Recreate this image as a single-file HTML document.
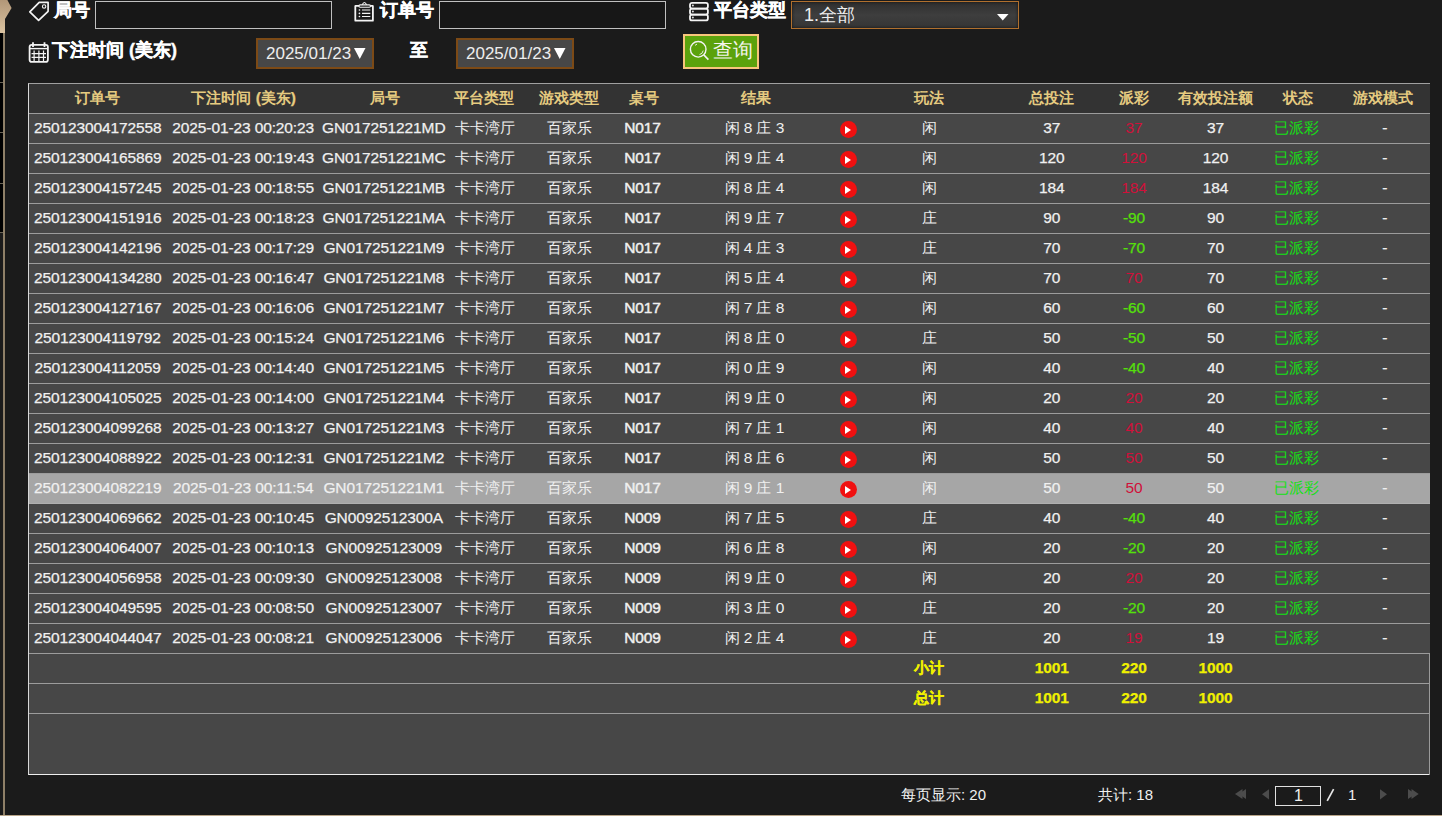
<!DOCTYPE html>
<html><head><meta charset="utf-8">
<style>
*{box-sizing:border-box;margin:0;padding:0}
html,body{width:1442px;height:816px;overflow:hidden;background:#1b1b1b}
body{position:relative;font-family:"Liberation Sans",sans-serif;color:#f2f2f2}
.abs{position:absolute}
/* left strip */
#lstrip{position:absolute;left:0;top:0;width:6px;height:816px}
#lline{position:absolute;left:3px;top:0;width:2px;height:816px;background:#8f8068}
.blk{position:absolute;left:0;width:3px;background:#000}
.sep{position:absolute;left:0;width:3px;height:1px;background:#6b6456}
#bline{position:absolute;left:0;top:815px;width:1442px;height:1px;background:#b9a589}
/* filters */
.lbl{position:absolute;font-weight:bold;font-size:18px;line-height:20px;color:#fff;white-space:nowrap;-webkit-text-stroke:0.4px #fff}
.inp{position:absolute;border:1px solid #c0c0c0;background:#171717}
.datebox{position:absolute;border:2px solid #7c4a16;background:#474747;color:#eee;font-size:17px;line-height:27px;white-space:nowrap}
.sel{position:absolute;border:1px solid #b0702e;background:linear-gradient(#2e2e2e,#3e3e3e 50%,#353535);box-shadow:inset 0 0 3px #111;color:#eee;font-size:18px;line-height:26px;white-space:nowrap}
.btn{position:absolute;border:2px solid #f7c57b;background:#5ba20c;color:#f4f4ec;font-size:20px;line-height:30px;white-space:nowrap}
/* table */
#tbl{position:absolute;left:28px;top:83px;width:1402px;height:692px;border-left:1px solid #d8d8d8;border-top:1px solid #a0a0a0;border-bottom:1px solid #eeeeee;background:#474747}
#rborder{position:absolute;left:1429px;top:654px;width:1px;height:121px;background:#9a9a9a}
.hd{position:absolute;left:0;top:0;width:1401px;height:30px;background:#333;border-bottom:1px solid #9c9c9c}
.hd .c{color:#e6cb80;font-weight:bold}
.row{position:absolute;left:0;width:1401px;height:30px;background:#474747;border-bottom:1px solid #9c9c9c}
.row.hl{background:#a6a6a6;border-bottom-color:#b0b0b0}
.row.sum{width:1400px}
.c{position:absolute;top:-1px;height:29px;line-height:29px;text-align:center;font-size:15px;white-space:nowrap;color:#f0f0f0}
.n{font-size:15.5px;letter-spacing:-0.12px;-webkit-text-stroke:0.25px currentColor;position:relative;top:0px}
.bd .n{-webkit-text-stroke:0.45px currentColor}
.res .n{-webkit-text-stroke:0}
.red .n{-webkit-text-stroke:0}
.red{color:#d0103a}
.grn{color:#55e00a}
.st{color:#14e014}
.sum .c{color:#f0f000;font-weight:bold;-webkit-text-stroke:0.2px #f0f000}
.play{position:absolute;top:7px;width:17px;height:17px;border-radius:50%;background:#f01010}
.play:after{content:"";position:absolute;left:5.5px;top:4.5px;border-left:6px solid #fff;border-top:4px solid transparent;border-bottom:4px solid transparent}
/* pager */
.pg{position:absolute;font-size:15px;line-height:20px;color:#f0f0f0;white-space:nowrap}
.pbox{position:absolute;left:1275px;top:786px;width:46px;height:20px;border:1px solid #e0e0e0;background:#1b1b1b}
</style></head><body>

<div id="lstrip">
  <svg class="abs" style="left:0;top:0" width="14" height="34"><defs><linearGradient id="tg" x1="0" y1="0" x2="0" y2="1"><stop offset="0" stop-color="#b29778"/><stop offset="1" stop-color="#dcc4a2"/></linearGradient></defs><polygon points="0,0 7.4,0 11.6,8 5,19 5,33 0,33" fill="url(#tg)"/></svg>
  <div id="lline" style="top:33px"></div>
  <div class="blk" style="top:33px;height:199px"></div>
  <div class="sep" style="top:82px"></div>
  <div class="sep" style="top:132px"></div>
  <div class="sep" style="top:183px"></div>
  <div class="sep" style="top:232px"></div>
</div>
<div id="bline"></div>

<!-- icons overlay -->
<svg class="abs" style="left:0;top:0;z-index:5" width="1442" height="80" fill="none" stroke="#f4f4f4" stroke-width="1.8">
  <!-- tag -->
  <path d="M39.2,2.4 L48.1,2.4 L48.1,11.3 L38.6,20.3 L29.8,11.8 Z" stroke-linejoin="round" stroke-width="1.7"/>
  <circle cx="44.1" cy="6.5" r="1.7" stroke-width="1.1"/>
  <!-- clipboard -->
  <rect x="355.3" y="5.9" width="17.6" height="14.8" rx="0.3"/>
  <rect x="358.9" y="4.9" width="11.6" height="2.4" rx="1.2" stroke-width="1.1" fill="#1b1b1b"/>
  <path d="M362.2,4.8 Q364.4,0.2 366.6,4.8" stroke-width="1.1"/>
  <path d="M362,10 H370.3 M362,13.4 H370.3 M362,16.5 H370.3" stroke-width="1.1"/>
  <path d="M359.4,10 h0.1 M359.4,13.4 h0.1 M359.4,16.5 h0.1" stroke-width="1.6" stroke-linecap="round"/>
  <!-- server -->
  <rect x="690" y="2.8" width="17.9" height="5.8" rx="2"/>
  <rect x="690" y="8.6" width="17.9" height="6" rx="2"/>
  <rect x="690" y="14.6" width="17.9" height="5.8" rx="2"/>
  <circle cx="692.9" cy="5.6" r="1" fill="#ddd" stroke="none"/>
  <circle cx="692.9" cy="11.5" r="1" fill="#ddd" stroke="none"/>
  <circle cx="692.9" cy="17.5" r="1" fill="#ddd" stroke="none"/>
  <!-- calendar -->
  <rect x="29.6" y="44.9" width="18.3" height="17" rx="2.2"/>
  <path d="M30,48.6 H47.5" stroke-width="1.4"/>
  <path d="M33,42.2 V47 M44.5,42.2 V47" stroke-width="1.8"/>
  <path d="M31.5,53.6 H46 M31.5,57.4 H46 M34.1,50.5 V61 M38.9,50.5 V61 M43.5,50.5 V61" stroke-width="1.2"/>
  <!-- magnifier -->
  <circle cx="698.2" cy="49.3" r="7.8" stroke-width="1.4"/>
  <path d="M703.8,54.9 L708.4,59.6" stroke-width="1.6"/>
  <path d="M695,45.5 A4.5,4.5 0 0 1 697,44.2" stroke-width="0.9"/>
  <path d="M699.5,54.6 A5,5 0 0 0 703.2,50.6" stroke-width="0.9"/>
</svg>

<div class="lbl" style="left:54px;top:0px">局号</div>
<div class="inp" style="left:95px;top:1px;width:237px;height:28px"></div>
<div class="lbl" style="left:380px;top:0px">订单号</div>
<div class="inp" style="left:439px;top:1px;width:227px;height:28px"></div>
<div class="lbl" style="left:714px;top:0px">平台类型</div>
<div class="sel" style="left:791px;top:1px;width:228px;height:28px"><span class="abs" style="left:12px;top:0">1.全部</span><svg class="abs" style="left:205px;top:12px" width="12" height="7"><polygon points="0,0 11.5,0 5.75,6.5" fill="#fff"/></svg></div>

<div class="lbl" style="left:52px;top:40px">下注时间 (美东)</div>
<div class="datebox" style="left:256px;top:38px;width:118px;height:31px"><span class="abs" style="left:8px;top:0px">2025/01/23</span><svg class="abs" style="left:96px;top:8px" width="12" height="12"><polygon points="0,0 11.5,0 5.75,11" fill="#fff"/></svg></div>
<div class="lbl" style="left:410px;top:40px">至</div>
<div class="datebox" style="left:456px;top:38px;width:118px;height:31px"><span class="abs" style="left:8px;top:0px">2025/01/23</span><svg class="abs" style="left:96px;top:8px" width="12" height="12"><polygon points="0,0 11.5,0 5.75,11" fill="#fff"/></svg></div>
<div class="btn" style="left:683px;top:34px;width:76px;height:35px"><span class="abs" style="left:28px;top:-1.5px">查询</span></div>

<div id="tbl">
<div class="hd"><span class="c" style="left:-11.1px;width:160px">订单号</span><span class="c" style="left:134.6px;width:160px">下注时间 <span class="n">(</span>美东<span class="n">)</span></span><span class="c" style="left:275.9px;width:160px">局号</span><span class="c" style="left:375.4px;width:160px">平台类型</span><span class="c" style="left:459.9px;width:160px">游戏类型</span><span class="c" style="left:534.9px;width:160px">桌号</span><span class="c" style="left:646.5px;width:160px">结果</span><span class="c" style="left:820.1px;width:160px">玩法</span><span class="c" style="left:942.7px;width:160px">总投注</span><span class="c" style="left:1024.5px;width:160px">派彩</span><span class="c" style="left:1106.1px;width:160px">有效投注额</span><span class="c" style="left:1189.1px;width:160px">状态</span><span class="c" style="left:1274.3px;width:160px">游戏模式</span></div>
<div class="row" style="top:30px"><span class="c" style="left:-11.3px;width:160px"><span class="n">250123004172558</span></span><span class="c" style="left:134.2px;width:160px"><span class="n">2025-01-23</span> <span class="n">00:20:23</span></span><span class="c" style="left:274.8px;width:160px"><span class="n">GN017251221MD</span></span><span class="c" style="left:375.8px;width:160px">卡卡湾厅</span><span class="c" style="left:460.1px;width:160px">百家乐</span><span class="c bd" style="left:533.6px;width:160px"><span class="n">N017</span></span><span class="c res" style="left:645.4px;width:160px">闲 <span class="n">8</span> 庄 <span class="n">3</span></span><i class="play" style="left:810.5px"></i><span class="c" style="left:820.0px;width:160px">闲</span><span class="c" style="left:942.8px;width:160px"><span class="n">37</span></span><span class="c red" style="left:1025.0px;width:160px"><span class="n">37</span></span><span class="c" style="left:1106.6px;width:160px"><span class="n">37</span></span><span class="c st" style="left:1187.8px;width:160px">已派彩</span><span class="c" style="left:1275.7px;width:160px"><span class="n">-</span></span></div>
<div class="row" style="top:60px"><span class="c" style="left:-11.3px;width:160px"><span class="n">250123004165869</span></span><span class="c" style="left:134.2px;width:160px"><span class="n">2025-01-23</span> <span class="n">00:19:43</span></span><span class="c" style="left:274.8px;width:160px"><span class="n">GN017251221MC</span></span><span class="c" style="left:375.8px;width:160px">卡卡湾厅</span><span class="c" style="left:460.1px;width:160px">百家乐</span><span class="c bd" style="left:533.6px;width:160px"><span class="n">N017</span></span><span class="c res" style="left:645.4px;width:160px">闲 <span class="n">9</span> 庄 <span class="n">4</span></span><i class="play" style="left:810.5px"></i><span class="c" style="left:820.0px;width:160px">闲</span><span class="c" style="left:942.8px;width:160px"><span class="n">120</span></span><span class="c red" style="left:1025.0px;width:160px"><span class="n">120</span></span><span class="c" style="left:1106.6px;width:160px"><span class="n">120</span></span><span class="c st" style="left:1187.8px;width:160px">已派彩</span><span class="c" style="left:1275.7px;width:160px"><span class="n">-</span></span></div>
<div class="row" style="top:90px"><span class="c" style="left:-11.3px;width:160px"><span class="n">250123004157245</span></span><span class="c" style="left:134.2px;width:160px"><span class="n">2025-01-23</span> <span class="n">00:18:55</span></span><span class="c" style="left:274.8px;width:160px"><span class="n">GN017251221MB</span></span><span class="c" style="left:375.8px;width:160px">卡卡湾厅</span><span class="c" style="left:460.1px;width:160px">百家乐</span><span class="c bd" style="left:533.6px;width:160px"><span class="n">N017</span></span><span class="c res" style="left:645.4px;width:160px">闲 <span class="n">8</span> 庄 <span class="n">4</span></span><i class="play" style="left:810.5px"></i><span class="c" style="left:820.0px;width:160px">闲</span><span class="c" style="left:942.8px;width:160px"><span class="n">184</span></span><span class="c red" style="left:1025.0px;width:160px"><span class="n">184</span></span><span class="c" style="left:1106.6px;width:160px"><span class="n">184</span></span><span class="c st" style="left:1187.8px;width:160px">已派彩</span><span class="c" style="left:1275.7px;width:160px"><span class="n">-</span></span></div>
<div class="row" style="top:120px"><span class="c" style="left:-11.3px;width:160px"><span class="n">250123004151916</span></span><span class="c" style="left:134.2px;width:160px"><span class="n">2025-01-23</span> <span class="n">00:18:23</span></span><span class="c" style="left:274.8px;width:160px"><span class="n">GN017251221MA</span></span><span class="c" style="left:375.8px;width:160px">卡卡湾厅</span><span class="c" style="left:460.1px;width:160px">百家乐</span><span class="c bd" style="left:533.6px;width:160px"><span class="n">N017</span></span><span class="c res" style="left:645.4px;width:160px">闲 <span class="n">9</span> 庄 <span class="n">7</span></span><i class="play" style="left:810.5px"></i><span class="c" style="left:820.0px;width:160px">庄</span><span class="c" style="left:942.8px;width:160px"><span class="n">90</span></span><span class="c grn" style="left:1025.0px;width:160px"><span class="n">-90</span></span><span class="c" style="left:1106.6px;width:160px"><span class="n">90</span></span><span class="c st" style="left:1187.8px;width:160px">已派彩</span><span class="c" style="left:1275.7px;width:160px"><span class="n">-</span></span></div>
<div class="row" style="top:150px"><span class="c" style="left:-11.3px;width:160px"><span class="n">250123004142196</span></span><span class="c" style="left:134.2px;width:160px"><span class="n">2025-01-23</span> <span class="n">00:17:29</span></span><span class="c" style="left:274.8px;width:160px"><span class="n">GN017251221M9</span></span><span class="c" style="left:375.8px;width:160px">卡卡湾厅</span><span class="c" style="left:460.1px;width:160px">百家乐</span><span class="c bd" style="left:533.6px;width:160px"><span class="n">N017</span></span><span class="c res" style="left:645.4px;width:160px">闲 <span class="n">4</span> 庄 <span class="n">3</span></span><i class="play" style="left:810.5px"></i><span class="c" style="left:820.0px;width:160px">庄</span><span class="c" style="left:942.8px;width:160px"><span class="n">70</span></span><span class="c grn" style="left:1025.0px;width:160px"><span class="n">-70</span></span><span class="c" style="left:1106.6px;width:160px"><span class="n">70</span></span><span class="c st" style="left:1187.8px;width:160px">已派彩</span><span class="c" style="left:1275.7px;width:160px"><span class="n">-</span></span></div>
<div class="row" style="top:180px"><span class="c" style="left:-11.3px;width:160px"><span class="n">250123004134280</span></span><span class="c" style="left:134.2px;width:160px"><span class="n">2025-01-23</span> <span class="n">00:16:47</span></span><span class="c" style="left:274.8px;width:160px"><span class="n">GN017251221M8</span></span><span class="c" style="left:375.8px;width:160px">卡卡湾厅</span><span class="c" style="left:460.1px;width:160px">百家乐</span><span class="c bd" style="left:533.6px;width:160px"><span class="n">N017</span></span><span class="c res" style="left:645.4px;width:160px">闲 <span class="n">5</span> 庄 <span class="n">4</span></span><i class="play" style="left:810.5px"></i><span class="c" style="left:820.0px;width:160px">闲</span><span class="c" style="left:942.8px;width:160px"><span class="n">70</span></span><span class="c red" style="left:1025.0px;width:160px"><span class="n">70</span></span><span class="c" style="left:1106.6px;width:160px"><span class="n">70</span></span><span class="c st" style="left:1187.8px;width:160px">已派彩</span><span class="c" style="left:1275.7px;width:160px"><span class="n">-</span></span></div>
<div class="row" style="top:210px"><span class="c" style="left:-11.3px;width:160px"><span class="n">250123004127167</span></span><span class="c" style="left:134.2px;width:160px"><span class="n">2025-01-23</span> <span class="n">00:16:06</span></span><span class="c" style="left:274.8px;width:160px"><span class="n">GN017251221M7</span></span><span class="c" style="left:375.8px;width:160px">卡卡湾厅</span><span class="c" style="left:460.1px;width:160px">百家乐</span><span class="c bd" style="left:533.6px;width:160px"><span class="n">N017</span></span><span class="c res" style="left:645.4px;width:160px">闲 <span class="n">7</span> 庄 <span class="n">8</span></span><i class="play" style="left:810.5px"></i><span class="c" style="left:820.0px;width:160px">闲</span><span class="c" style="left:942.8px;width:160px"><span class="n">60</span></span><span class="c grn" style="left:1025.0px;width:160px"><span class="n">-60</span></span><span class="c" style="left:1106.6px;width:160px"><span class="n">60</span></span><span class="c st" style="left:1187.8px;width:160px">已派彩</span><span class="c" style="left:1275.7px;width:160px"><span class="n">-</span></span></div>
<div class="row" style="top:240px"><span class="c" style="left:-11.3px;width:160px"><span class="n">250123004119792</span></span><span class="c" style="left:134.2px;width:160px"><span class="n">2025-01-23</span> <span class="n">00:15:24</span></span><span class="c" style="left:274.8px;width:160px"><span class="n">GN017251221M6</span></span><span class="c" style="left:375.8px;width:160px">卡卡湾厅</span><span class="c" style="left:460.1px;width:160px">百家乐</span><span class="c bd" style="left:533.6px;width:160px"><span class="n">N017</span></span><span class="c res" style="left:645.4px;width:160px">闲 <span class="n">8</span> 庄 <span class="n">0</span></span><i class="play" style="left:810.5px"></i><span class="c" style="left:820.0px;width:160px">庄</span><span class="c" style="left:942.8px;width:160px"><span class="n">50</span></span><span class="c grn" style="left:1025.0px;width:160px"><span class="n">-50</span></span><span class="c" style="left:1106.6px;width:160px"><span class="n">50</span></span><span class="c st" style="left:1187.8px;width:160px">已派彩</span><span class="c" style="left:1275.7px;width:160px"><span class="n">-</span></span></div>
<div class="row" style="top:270px"><span class="c" style="left:-11.3px;width:160px"><span class="n">250123004112059</span></span><span class="c" style="left:134.2px;width:160px"><span class="n">2025-01-23</span> <span class="n">00:14:40</span></span><span class="c" style="left:274.8px;width:160px"><span class="n">GN017251221M5</span></span><span class="c" style="left:375.8px;width:160px">卡卡湾厅</span><span class="c" style="left:460.1px;width:160px">百家乐</span><span class="c bd" style="left:533.6px;width:160px"><span class="n">N017</span></span><span class="c res" style="left:645.4px;width:160px">闲 <span class="n">0</span> 庄 <span class="n">9</span></span><i class="play" style="left:810.5px"></i><span class="c" style="left:820.0px;width:160px">闲</span><span class="c" style="left:942.8px;width:160px"><span class="n">40</span></span><span class="c grn" style="left:1025.0px;width:160px"><span class="n">-40</span></span><span class="c" style="left:1106.6px;width:160px"><span class="n">40</span></span><span class="c st" style="left:1187.8px;width:160px">已派彩</span><span class="c" style="left:1275.7px;width:160px"><span class="n">-</span></span></div>
<div class="row" style="top:300px"><span class="c" style="left:-11.3px;width:160px"><span class="n">250123004105025</span></span><span class="c" style="left:134.2px;width:160px"><span class="n">2025-01-23</span> <span class="n">00:14:00</span></span><span class="c" style="left:274.8px;width:160px"><span class="n">GN017251221M4</span></span><span class="c" style="left:375.8px;width:160px">卡卡湾厅</span><span class="c" style="left:460.1px;width:160px">百家乐</span><span class="c bd" style="left:533.6px;width:160px"><span class="n">N017</span></span><span class="c res" style="left:645.4px;width:160px">闲 <span class="n">9</span> 庄 <span class="n">0</span></span><i class="play" style="left:810.5px"></i><span class="c" style="left:820.0px;width:160px">闲</span><span class="c" style="left:942.8px;width:160px"><span class="n">20</span></span><span class="c red" style="left:1025.0px;width:160px"><span class="n">20</span></span><span class="c" style="left:1106.6px;width:160px"><span class="n">20</span></span><span class="c st" style="left:1187.8px;width:160px">已派彩</span><span class="c" style="left:1275.7px;width:160px"><span class="n">-</span></span></div>
<div class="row" style="top:330px"><span class="c" style="left:-11.3px;width:160px"><span class="n">250123004099268</span></span><span class="c" style="left:134.2px;width:160px"><span class="n">2025-01-23</span> <span class="n">00:13:27</span></span><span class="c" style="left:274.8px;width:160px"><span class="n">GN017251221M3</span></span><span class="c" style="left:375.8px;width:160px">卡卡湾厅</span><span class="c" style="left:460.1px;width:160px">百家乐</span><span class="c bd" style="left:533.6px;width:160px"><span class="n">N017</span></span><span class="c res" style="left:645.4px;width:160px">闲 <span class="n">7</span> 庄 <span class="n">1</span></span><i class="play" style="left:810.5px"></i><span class="c" style="left:820.0px;width:160px">闲</span><span class="c" style="left:942.8px;width:160px"><span class="n">40</span></span><span class="c red" style="left:1025.0px;width:160px"><span class="n">40</span></span><span class="c" style="left:1106.6px;width:160px"><span class="n">40</span></span><span class="c st" style="left:1187.8px;width:160px">已派彩</span><span class="c" style="left:1275.7px;width:160px"><span class="n">-</span></span></div>
<div class="row" style="top:360px"><span class="c" style="left:-11.3px;width:160px"><span class="n">250123004088922</span></span><span class="c" style="left:134.2px;width:160px"><span class="n">2025-01-23</span> <span class="n">00:12:31</span></span><span class="c" style="left:274.8px;width:160px"><span class="n">GN017251221M2</span></span><span class="c" style="left:375.8px;width:160px">卡卡湾厅</span><span class="c" style="left:460.1px;width:160px">百家乐</span><span class="c bd" style="left:533.6px;width:160px"><span class="n">N017</span></span><span class="c res" style="left:645.4px;width:160px">闲 <span class="n">8</span> 庄 <span class="n">6</span></span><i class="play" style="left:810.5px"></i><span class="c" style="left:820.0px;width:160px">闲</span><span class="c" style="left:942.8px;width:160px"><span class="n">50</span></span><span class="c red" style="left:1025.0px;width:160px"><span class="n">50</span></span><span class="c" style="left:1106.6px;width:160px"><span class="n">50</span></span><span class="c st" style="left:1187.8px;width:160px">已派彩</span><span class="c" style="left:1275.7px;width:160px"><span class="n">-</span></span></div>
<div class="row hl" style="top:390px"><span class="c" style="left:-11.3px;width:160px"><span class="n">250123004082219</span></span><span class="c" style="left:134.2px;width:160px"><span class="n">2025-01-23</span> <span class="n">00:11:54</span></span><span class="c" style="left:274.8px;width:160px"><span class="n">GN017251221M1</span></span><span class="c" style="left:375.8px;width:160px">卡卡湾厅</span><span class="c" style="left:460.1px;width:160px">百家乐</span><span class="c bd" style="left:533.6px;width:160px"><span class="n">N017</span></span><span class="c res" style="left:645.4px;width:160px">闲 <span class="n">9</span> 庄 <span class="n">1</span></span><i class="play" style="left:810.5px"></i><span class="c" style="left:820.0px;width:160px">闲</span><span class="c" style="left:942.8px;width:160px"><span class="n">50</span></span><span class="c red" style="left:1025.0px;width:160px"><span class="n">50</span></span><span class="c" style="left:1106.6px;width:160px"><span class="n">50</span></span><span class="c st" style="left:1187.8px;width:160px">已派彩</span><span class="c" style="left:1275.7px;width:160px"><span class="n">-</span></span></div>
<div class="row" style="top:420px"><span class="c" style="left:-11.3px;width:160px"><span class="n">250123004069662</span></span><span class="c" style="left:134.2px;width:160px"><span class="n">2025-01-23</span> <span class="n">00:10:45</span></span><span class="c" style="left:274.8px;width:160px"><span class="n">GN0092512300A</span></span><span class="c" style="left:375.8px;width:160px">卡卡湾厅</span><span class="c" style="left:460.1px;width:160px">百家乐</span><span class="c bd" style="left:533.6px;width:160px"><span class="n">N009</span></span><span class="c res" style="left:645.4px;width:160px">闲 <span class="n">7</span> 庄 <span class="n">5</span></span><i class="play" style="left:810.5px"></i><span class="c" style="left:820.0px;width:160px">庄</span><span class="c" style="left:942.8px;width:160px"><span class="n">40</span></span><span class="c grn" style="left:1025.0px;width:160px"><span class="n">-40</span></span><span class="c" style="left:1106.6px;width:160px"><span class="n">40</span></span><span class="c st" style="left:1187.8px;width:160px">已派彩</span><span class="c" style="left:1275.7px;width:160px"><span class="n">-</span></span></div>
<div class="row" style="top:450px"><span class="c" style="left:-11.3px;width:160px"><span class="n">250123004064007</span></span><span class="c" style="left:134.2px;width:160px"><span class="n">2025-01-23</span> <span class="n">00:10:13</span></span><span class="c" style="left:274.8px;width:160px"><span class="n">GN00925123009</span></span><span class="c" style="left:375.8px;width:160px">卡卡湾厅</span><span class="c" style="left:460.1px;width:160px">百家乐</span><span class="c bd" style="left:533.6px;width:160px"><span class="n">N009</span></span><span class="c res" style="left:645.4px;width:160px">闲 <span class="n">6</span> 庄 <span class="n">8</span></span><i class="play" style="left:810.5px"></i><span class="c" style="left:820.0px;width:160px">闲</span><span class="c" style="left:942.8px;width:160px"><span class="n">20</span></span><span class="c grn" style="left:1025.0px;width:160px"><span class="n">-20</span></span><span class="c" style="left:1106.6px;width:160px"><span class="n">20</span></span><span class="c st" style="left:1187.8px;width:160px">已派彩</span><span class="c" style="left:1275.7px;width:160px"><span class="n">-</span></span></div>
<div class="row" style="top:480px"><span class="c" style="left:-11.3px;width:160px"><span class="n">250123004056958</span></span><span class="c" style="left:134.2px;width:160px"><span class="n">2025-01-23</span> <span class="n">00:09:30</span></span><span class="c" style="left:274.8px;width:160px"><span class="n">GN00925123008</span></span><span class="c" style="left:375.8px;width:160px">卡卡湾厅</span><span class="c" style="left:460.1px;width:160px">百家乐</span><span class="c bd" style="left:533.6px;width:160px"><span class="n">N009</span></span><span class="c res" style="left:645.4px;width:160px">闲 <span class="n">9</span> 庄 <span class="n">0</span></span><i class="play" style="left:810.5px"></i><span class="c" style="left:820.0px;width:160px">闲</span><span class="c" style="left:942.8px;width:160px"><span class="n">20</span></span><span class="c red" style="left:1025.0px;width:160px"><span class="n">20</span></span><span class="c" style="left:1106.6px;width:160px"><span class="n">20</span></span><span class="c st" style="left:1187.8px;width:160px">已派彩</span><span class="c" style="left:1275.7px;width:160px"><span class="n">-</span></span></div>
<div class="row" style="top:510px"><span class="c" style="left:-11.3px;width:160px"><span class="n">250123004049595</span></span><span class="c" style="left:134.2px;width:160px"><span class="n">2025-01-23</span> <span class="n">00:08:50</span></span><span class="c" style="left:274.8px;width:160px"><span class="n">GN00925123007</span></span><span class="c" style="left:375.8px;width:160px">卡卡湾厅</span><span class="c" style="left:460.1px;width:160px">百家乐</span><span class="c bd" style="left:533.6px;width:160px"><span class="n">N009</span></span><span class="c res" style="left:645.4px;width:160px">闲 <span class="n">3</span> 庄 <span class="n">0</span></span><i class="play" style="left:810.5px"></i><span class="c" style="left:820.0px;width:160px">庄</span><span class="c" style="left:942.8px;width:160px"><span class="n">20</span></span><span class="c grn" style="left:1025.0px;width:160px"><span class="n">-20</span></span><span class="c" style="left:1106.6px;width:160px"><span class="n">20</span></span><span class="c st" style="left:1187.8px;width:160px">已派彩</span><span class="c" style="left:1275.7px;width:160px"><span class="n">-</span></span></div>
<div class="row" style="top:540px"><span class="c" style="left:-11.3px;width:160px"><span class="n">250123004044047</span></span><span class="c" style="left:134.2px;width:160px"><span class="n">2025-01-23</span> <span class="n">00:08:21</span></span><span class="c" style="left:274.8px;width:160px"><span class="n">GN00925123006</span></span><span class="c" style="left:375.8px;width:160px">卡卡湾厅</span><span class="c" style="left:460.1px;width:160px">百家乐</span><span class="c bd" style="left:533.6px;width:160px"><span class="n">N009</span></span><span class="c res" style="left:645.4px;width:160px">闲 <span class="n">2</span> 庄 <span class="n">4</span></span><i class="play" style="left:810.5px"></i><span class="c" style="left:820.0px;width:160px">庄</span><span class="c" style="left:942.8px;width:160px"><span class="n">20</span></span><span class="c red" style="left:1025.0px;width:160px"><span class="n">19</span></span><span class="c" style="left:1106.6px;width:160px"><span class="n">19</span></span><span class="c st" style="left:1187.8px;width:160px">已派彩</span><span class="c" style="left:1275.7px;width:160px"><span class="n">-</span></span></div>
<div class="row sum" style="top:570px"><span class="c" style="left:820.0px;width:160px">小计</span><span class="c" style="left:942.8px;width:160px"><span class="n">1001</span></span><span class="c" style="left:1025.0px;width:160px"><span class="n">220</span></span><span class="c" style="left:1106.6px;width:160px"><span class="n">1000</span></span></div>
<div class="row sum" style="top:600px"><span class="c" style="left:820.0px;width:160px">总计</span><span class="c" style="left:942.8px;width:160px"><span class="n">1001</span></span><span class="c" style="left:1025.0px;width:160px"><span class="n">220</span></span><span class="c" style="left:1106.6px;width:160px"><span class="n">1000</span></span></div>
</div>
<div id="rborder"></div>

<div class="pg" style="left:901px;top:785px">每页显示: 20</div>
<div class="pg" style="left:1098px;top:785px">共计: 18</div>
<svg class="abs" style="left:1230px;top:785px" width="200" height="20" fill="#4c4c4c">
  <polygon points="5,9 12.5,4 12.5,14"/><polygon points="8.8,9 16,4 16,14"/>
  <polygon points="32,9.2 39,4.2 39,14.4"/>
  <polygon points="150,4.2 157,9.2 150,14.4"/>
  <polygon points="178,4 185.5,9 178,14"/><polygon points="181.5,4 188.7,9 181.5,14"/>
</svg>
<div class="pbox"></div>
<div class="pg" style="left:1294px;top:786px;font-size:16px">1</div>
<svg class="abs" style="left:1320px;top:784px" width="20" height="22"><line x1="13.6" y1="5.2" x2="7.2" y2="16.8" stroke="#e6e6e6" stroke-width="1.7"/></svg>
<div class="pg" style="left:1348px;top:785px">1</div>

</body></html>
